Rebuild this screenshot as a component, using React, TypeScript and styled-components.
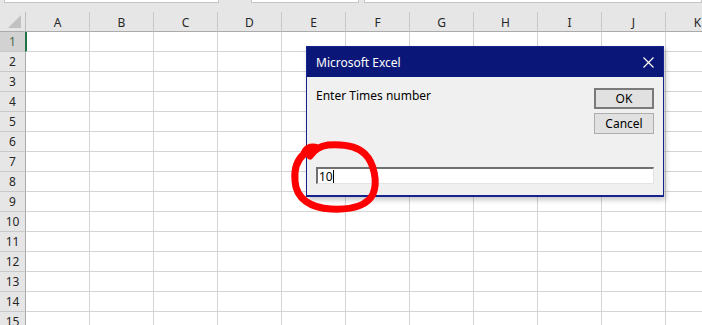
import React from "react";
import styled, { createGlobalStyle } from "styled-components";

const GlobalStyle = createGlobalStyle`
  html, body { margin: 0; padding: 0; background: #ffffff; }
  * { box-sizing: border-box; }
`;

const COLUMNS = ["A", "B", "C", "D", "E", "F", "G", "H", "I", "J", "K"];
const ROWS = Array.from({ length: 15 }, (_, i) => i + 1);

const Page = styled.div`
  position: relative;
  width: 702px;
  height: 325px;
  overflow: hidden;
  background: #ffffff;
  font-family: "Noto Sans", "Liberation Sans", sans-serif;
`;

const FormulaStrip = styled.div`
  display: flex;
  height: 12px;
  background: #e6e6e6;
  padding-left: 4px;
`;

const FormulaBox = styled.div<{ $w: number; $gap: number }>`
  width: ${({ $w }) => $w}px;
  margin-left: ${({ $gap }) => $gap}px;
  height: 3px;
  background: #ffffff;
  border: 1px solid #c6c6c6;
  border-top: none;
`;

const Sheet = styled.div`
  display: grid;
  grid-template-columns: 26px repeat(11, 64px);
  grid-auto-rows: 20px;
`;

const Corner = styled.div`
  position: relative;
  background: #e6e6e6;
  border-right: 1px solid #bdbdbd;
  border-bottom: 1px solid #ababab;
  &::after {
    content: "";
    position: absolute;
    right: 4px;
    bottom: 3px;
    border-left: 13px solid transparent;
    border-bottom: 13px solid #c1c1c1;
  }
`;

const ColHead = styled.div`
  display: flex;
  align-items: center;
  justify-content: center;
  background: #e6e6e6;
  border-right: 1px solid #c9c9c9;
  border-bottom: 1px solid #ababab;
  color: #262626;
  font-size: 12px;
  padding-top: 1px;
`;

const RowHead = styled.div<{ $active?: boolean }>`
  display: flex;
  align-items: center;
  justify-content: center;
  background: ${({ $active }) => ($active ? "#d2d2d2" : "#e6e6e6")};
  border-right: 1px solid #ababab;
  border-bottom: 1px solid #c9c9c9;
  color: ${({ $active }) => ($active ? "#4d6b4a" : "#262626")};
  font-size: 12px;
`;

const Cell = styled.div<{ $selected?: boolean }>`
  border-right: 1px solid #d4d4d4;
  border-bottom: 1px solid #d4d4d4;
  border-left: ${({ $selected }) => ($selected ? "2px solid #217346" : "none")};
  margin-left: ${({ $selected }) => ($selected ? "-1px" : "0")};
`;

const Dialog = styled.div`
  position: absolute;
  left: 306px;
  top: 46px;
  width: 358px;
  height: 151px;
  display: flex;
  flex-direction: column;
  background: #f0f0f0;
  border: 1px solid #15238f;
  border-bottom-width: 2px;
  box-shadow: 2px 3px 5px rgba(0, 0, 0, 0.22);
`;

const TitleBar = styled.div`
  display: flex;
  align-items: center;
  justify-content: space-between;
  height: 30px;
  background: #0a1678;
  color: #ffffff;
  font-size: 12px;
  padding: 0 9px;
`;

const CloseIcon = styled.svg`
  width: 11px;
  height: 11px;
`;

const Body = styled.div`
  flex: 1;
  display: flex;
  flex-direction: column;
  padding: 11px 9px 11px 9px;
`;

const TopRow = styled.div`
  display: flex;
  justify-content: space-between;
  align-items: flex-start;
`;

const Prompt = styled.div`
  font-size: 12px;
  color: #000000;
  line-height: 16px;
`;

const ButtonStack = styled.div`
  display: flex;
  flex-direction: column;
  gap: 4px;
`;

const Button = styled.div<{ $default?: boolean }>`
  width: 60px;
  height: 21px;
  display: flex;
  align-items: center;
  justify-content: center;
  background: #e1e1e1;
  border: ${({ $default }) => ($default ? "2px solid #7a7a7a" : "1px solid #adadad")};
  font-size: 12px;
  color: #000000;
`;

const Input = styled.div`
  margin-top: auto;
  height: 17px;
  display: flex;
  align-items: center;
  background: #ffffff;
  border-top: 2px solid #707070;
  border-left: 2px solid #707070;
  border-right: 1px solid #e3e3e3;
  border-bottom: 1px solid #e3e3e3;
  padding-left: 1px;
  font-size: 12px;
  color: #000000;
`;

const Caret = styled.span`
  display: inline-block;
  width: 1px;
  height: 13px;
  background: #000000;
`;

const Annotation = styled.svg`
  position: absolute;
  left: 280px;
  top: 136px;
  width: 110px;
  height: 85px;
  pointer-events: none;
`;

export default function App() {
  return (
    <>
      <GlobalStyle />
      <Page>
        <FormulaStrip>
          <FormulaBox $w={216} $gap={0} />
          <FormulaBox $w={108} $gap={32} />
          <FormulaBox $w={340} $gap={5} />
        </FormulaStrip>
        <Sheet>
          <Corner />
          {COLUMNS.map((c) => (
            <ColHead key={c}>{c}</ColHead>
          ))}
          {ROWS.map((r) => (
            <React.Fragment key={r}>
              <RowHead $active={r === 1}>{r}</RowHead>
              {COLUMNS.map((c, i) => (
                <Cell key={c} $selected={r === 1 && i === 0} />
              ))}
            </React.Fragment>
          ))}
        </Sheet>

        <Dialog>
          <TitleBar>
            <span>Microsoft Excel</span>
            <CloseIcon viewBox="0 0 11 11">
              <path d="M0.5 0.5 L10.5 10.5 M10.5 0.5 L0.5 10.5" stroke="#ffffff" strokeWidth="1.2" />
            </CloseIcon>
          </TitleBar>
          <Body>
            <TopRow>
              <Prompt>Enter Times number</Prompt>
              <ButtonStack>
                <Button $default>OK</Button>
                <Button>Cancel</Button>
              </ButtonStack>
            </TopRow>
            <Input>
              10<Caret />
            </Input>
          </Body>
        </Dialog>

        <Annotation viewBox="280 136 110 85">
          <path
            d="M318 148 C310 145 305 149 304 154 C297 160 294 170 295 181 C296 199 311 208 331 209 C351 210 367 206 373 194 C378 182 374 163 365 154 C357 146 342 144 328 145 C320 146 314 150 310 156"
            fill="none"
            stroke="#ff0000"
            strokeWidth="7"
            strokeLinecap="round"
            strokeLinejoin="round"
          />
        </Annotation>
      </Page>
    </>
  );
}
